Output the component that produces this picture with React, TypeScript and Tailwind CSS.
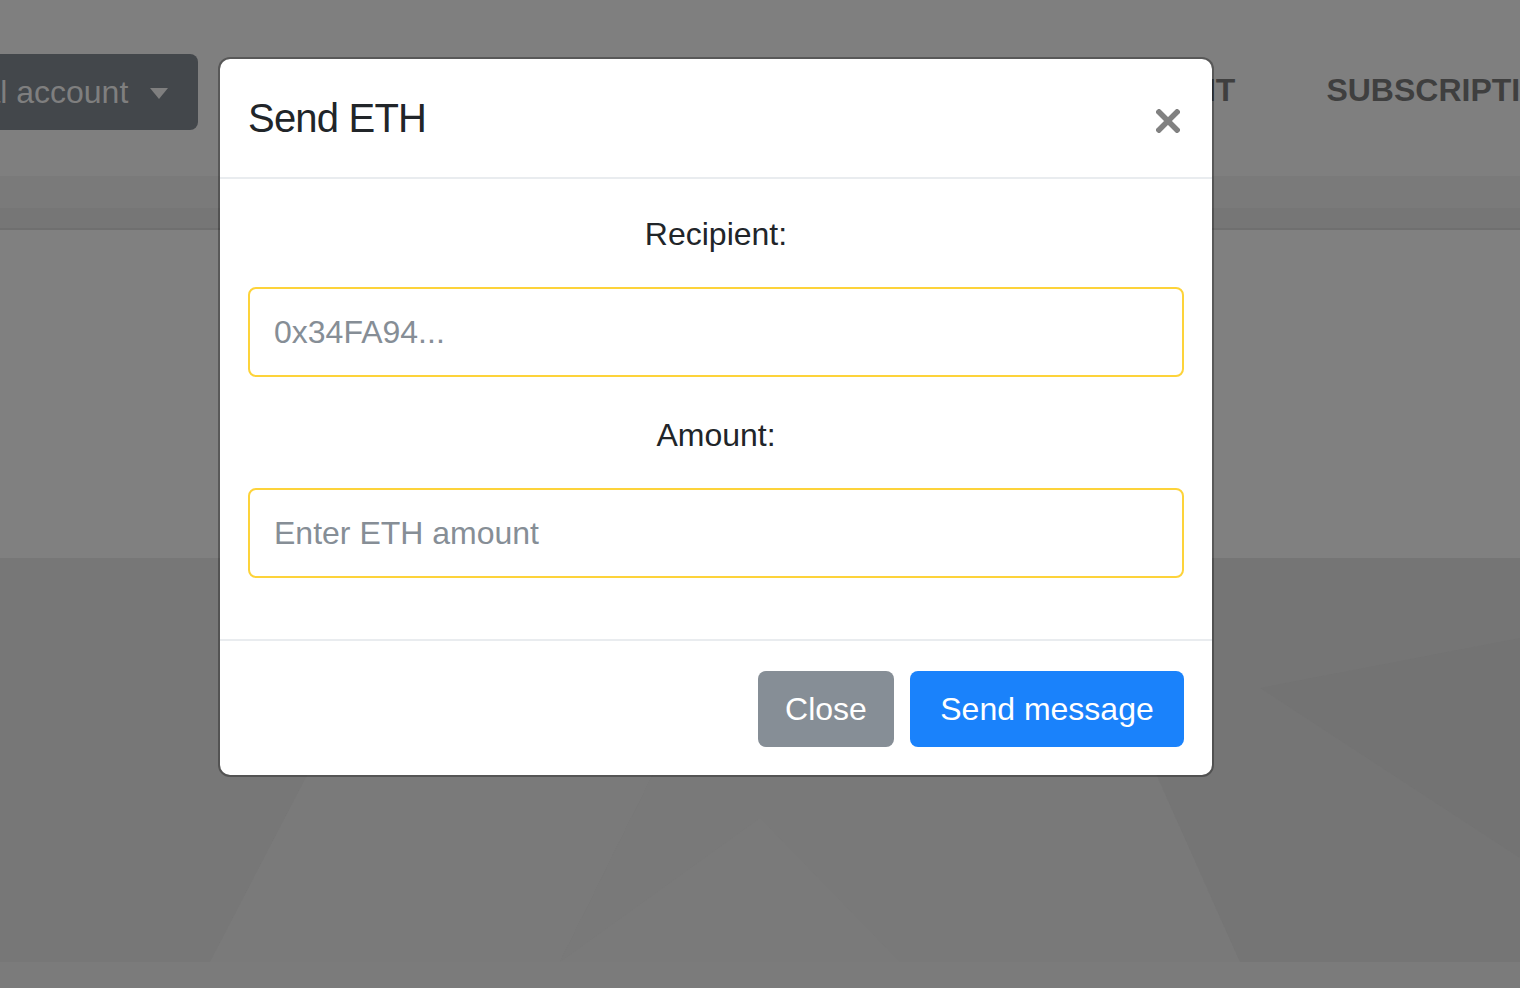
import React, { FC, useState } from "react";

interface Field {
  label: string;
  placeholder: string;
}

const fields: Field[] = [
  { label: "Recipient:", placeholder: "0x34FA94..." },
  { label: "Amount:", placeholder: "Enter ETH amount" },
];

// low-poly page background, already dimmed by the modal backdrop
const Pattern: FC = () => (
  <svg
    className="block h-full w-full"
    viewBox="0 0 1520 404"
    preserveAspectRatio="none"
  >
    <rect width="1520" height="404" fill="#787878" />
    <polygon points="0,0 420,0 210,404 0,404" fill="#777777" />
    <polygon points="420,0 760,0 560,404 210,404" fill="#7a7a7a" />
    <polygon points="760,0 1060,0 1240,404 560,404" fill="#797979" />
    <polygon points="1060,0 1520,0 1520,404 1240,404" fill="#757575" />
    <polygon points="560,404 760,260 900,404" fill="#7a7a7a" />
    <polygon points="1260,130 1520,80 1520,300" fill="#737373" />
  </svg>
);

const CloseIcon: FC = () => (
  <svg width="24" height="24" viewBox="0 0 24 24">
    <path
      d="M3 3 L21 21 M21 3 L3 21"
      stroke="#818181"
      strokeWidth="5.5"
      strokeLinecap="square"
    />
  </svg>
);

const App: FC = () => {
  const [values, setValues] = useState<string[]>(["", ""]);

  return (
    <div className="relative h-[988px] w-full overflow-hidden bg-[#7f7f7f] font-['Liberation_Sans',Arial,sans-serif]">
      {/* page behind the backdrop */}
      <div className="flex h-[176px] items-start whitespace-nowrap pt-[54px]">
        <button className="ml-[-145px] flex h-[76px] items-center gap-[22px] rounded-[8px] bg-[#43474b] pl-[26px] pr-[30px] text-[32px] text-[#7f7f7f]">
          Personal account
          <span className="mt-[2px] h-0 w-0 border-x-[9px] border-t-[11px] border-x-transparent border-t-[#7f7f7f]" />
        </button>
        <div className="ml-[886px] flex gap-[91px] pt-[12px] text-[32px] font-bold text-[#3f3f3f]">
          <span>PAYMENT</span>
          <span>SUBSCRIPTIONS</span>
        </div>
      </div>
      <div className="h-[32px] bg-[#7a7a7a]" />
      <div className="h-[20px] bg-[#767676]" />
      <div className="h-[2px] bg-[#6f6f6f]" />
      <div className="h-[328px] bg-[#808080]" />
      <div className="h-[404px]">
        <Pattern />
      </div>
      <div className="h-[26px] bg-[#7b7b7b]" />

      {/* modal */}
      <div className="absolute left-[218px] top-[57px] w-[996px] rounded-[12px] border-2 border-black/30 bg-white bg-clip-padding">
        <div className="flex h-[120px] items-center justify-between border-b-2 border-[#e9ecef] px-[28px]">
          <h5 className="text-[40px] leading-[60px] tracking-[-0.02em] text-[#212529]">
            Send ETH
          </h5>
          <button className="mr-[4px] mt-[6px]">
            <CloseIcon />
          </button>
        </div>

        <div className="flex h-[460px] flex-col px-[28px] pt-[31px]">
          {fields.map((field, i) => (
            <div key={field.label} className={i === 0 ? "mb-[34px]" : ""}>
              <label className="mb-[29px] block text-center text-[32px] leading-[48px] text-[#212529]">
                {field.label}
              </label>
              <input
                className="block h-[90px] w-full rounded-[8px] border-2 border-[#fdd33a] px-[24px] text-[32px] text-[#495057] outline-none placeholder:text-[#868e96]"
                placeholder={field.placeholder}
                value={values[i]}
                onChange={(e) =>
                  setValues((prev) =>
                    prev.map((v, j) => (j === i ? e.target.value : v))
                  )
                }
              />
            </div>
          ))}
        </div>

        <div className="flex justify-end gap-[16px] border-t-2 border-[#e9ecef] px-[28px] pb-[28px] pt-[30px]">
          <button className="h-[76px] w-[136px] rounded-[8px] bg-[#868e96] text-[32px] text-white">
            Close
          </button>
          <button className="h-[76px] w-[274px] rounded-[8px] bg-[#1a82fb] text-[32px] text-white">
            Send message
          </button>
        </div>
      </div>
    </div>
  );
};

export default App;
